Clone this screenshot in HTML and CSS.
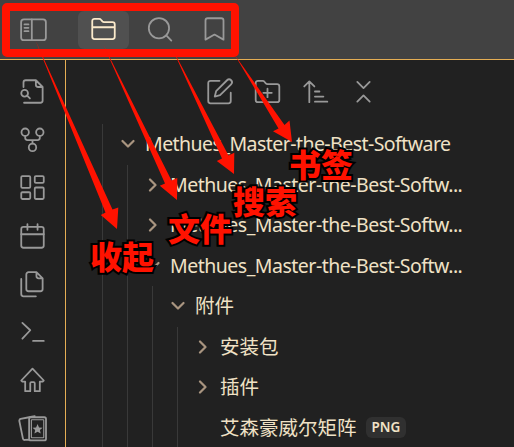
FILE: index.html
```html
<!DOCTYPE html>
<html lang="zh-CN">
<head>
<meta charset="utf-8">
<title>Methues</title>
<link rel="stylesheet" href="styles.css">
</head>
<body>
<div class="app">
  <header class="topbar">
    <div class="toggle"><svg class="icon" viewBox="0 0 24 24"><rect x="1" y="3" width="22" height="18.5" rx="2.5"/><path d="M10.5 3V21.500M4 7.500h3.500M4 10.500h3.500M4 13.500h3.500"/></svg></div>
    <nav class="tabs">
      <div class="tab active"><svg class="icon" viewBox="0 0 24 24"><path d="M2 4.500a2 2 0 0 1 2-2h4.200a2 2 0 0 1 1.600.8L11 4.800a2 2 0 0 0 1.600.7H20a2 2 0 0 1 2 2V18.500a2 2 0 0 1-2 2H4a2 2 0 0 1-2-2ZM2 10h20"/></svg></div>
      <div class="tab"><svg class="icon" viewBox="0 0 24 24"><circle cx="11.500" cy="10.800" r="9"/><path d="m18 17.300 4.500 4.500"/></svg></div>
      <div class="tab"><svg class="icon" viewBox="0 0 24 24"><path d="m20 21-8-4.500L4 21V4a2 2 0 0 1 2-2h12a2 2 0 0 1 2 2Z"/></svg></div>
    </nav>
  </header>
  <div class="body">
    <aside class="ribbon">
      <svg class="icon" viewBox="0 0 24 24"><path d="M4 8V4a2 2 0 0 1 2-2h9l6 6v12a2 2 0 0 1-2 2H4.500M15 2v4a2 2 0 0 0 2 2h4"/><circle cx="5" cy="13.500" r="3"/><path d="m7.200 15.700 2.500 2.500"/></svg>
      <svg class="icon" viewBox="0 0 24 24"><circle cx="12" cy="19" r="3.300"/><circle cx="5.500" cy="5.500" r="3.300"/><circle cx="18.500" cy="5.500" r="3.300"/><path d="M18.500 9v1.500a2 2 0 0 1-2 2h-9a2 2 0 0 1-2-2V9M12 12.500v3"/></svg>
      <svg class="icon" viewBox="0 0 24 24"><rect x="2" y="1.800" width="8" height="10.500" rx="1"/><rect x="14" y="1.800" width="8" height="6" rx="1"/><rect x="14" y="12" width="8" height="10.200" rx="1"/><rect x="2" y="16.200" width="8" height="6" rx="1"/></svg>
      <svg class="icon" viewBox="0 0 24 24"><rect x="2" y="3.500" width="20" height="18.500" rx="2"/><path d="M7.500 1v5M16.500 1v5M2 10h20"/></svg>
      <svg class="icon" viewBox="0 0 24 24"><path d="M15.500 1H8.500a2 2 0 0 0-2 2v13a2 2 0 0 0 2 2H19a2 2 0 0 0 2-2V6.500ZM15.500 1V4.500a2 2 0 0 0 2 2H21M2 7v13.500a2 2 0 0 0 2 2h11"/></svg>
      <svg class="icon" viewBox="0 0 24 24"><path d="m3 17.500 7-7.500-7-6.500M12.500 19.500h9.500"/></svg>
      <svg class="icon" viewBox="0 0 24 24"><path d="M2 12 12 1.500l10 10.500-1 1h-2.500v8.500H14v-7a1 1 0 0 0-1-1h-2a1 1 0 0 0-1 1v7H5.500v-8.500H3Z"/></svg>
      <svg class="icon" viewBox="0 0 24 24"><path d="M9 2 1.500 3.500a1.500 1.500 0 0 0-1.200 1.800L3.500 21a1.500 1.500 0 0 0 1.700 1.200L9 22M9 2l5-1"/><rect x="9" y="2" width="15" height="20.500" rx="1.500"/><rect x="11" y="4.200" width="11" height="16" rx=".5" class="thin"/><path class="solid" d="m16.500 8 1.300 3 3.200.3-2.400 2.100.7 3.100-2.800-1.600-2.800 1.600.7-3.100-2.400-2.100 3.200-.3Z"/></svg>
    </aside>
    <main class="explorer">
      <div class="actions">
        <svg class="icon" viewBox="0 0 24 24"><path d="M12 2.500H4a2 2 0 0 0-2 2V20.500a2 2 0 0 0 2 2H20a2 2 0 0 0 2-2V13M18.700 2a2.500 2.500 0 0 1 3.600 3.600L12.500 15.300l-4.700 1.200L9 11.700Z"/></svg>
        <svg class="icon" viewBox="0 0 24 24"><path d="M1.500 4.500a2 2 0 0 1 2-2h4.200a2 2 0 0 1 1.600.8L10.500 4.800a2 2 0 0 0 1.600.7H20.500a2 2 0 0 1 2 2V19.500a2 2 0 0 1-2 2H3.500a2 2 0 0 1-2-2ZM12 9.500v7.500M8.300 13.200h7.500"/></svg>
        <svg class="icon" viewBox="0 0 24 24"><path d="M2 7.500 6.500 3l4.500 4.500M6.500 3v18.500M11.500 12h4M11.500 16.500h7.500M11.500 21h11"/></svg>
        <svg class="icon" viewBox="0 0 24 24"><path d="m6.500 3.500 5.500 5.500 5.500-5.500M6.500 21l5.500-5.500 5.500 5.500"/></svg>
      </div>
      <div class="tree">
        <div class="row"><svg class="chevron open" viewBox="0 0 14 14"><path d="m4 1.500 5.500 5.500L4 12.500"/></svg><span class="latin root">Methues_Master-the-Best-Software</span></div>
        <div class="children">
          <div class="row"><svg class="chevron" viewBox="0 0 14 14"><path d="m4 1.500 5.500 5.500L4 12.500"/></svg><span class="latin">Methues_Master-the-Best-Softw...</span></div>
          <div class="row"><svg class="chevron" viewBox="0 0 14 14"><path d="m4 1.500 5.500 5.500L4 12.500"/></svg><span class="latin">Methues_Master-the-Best-Softw...</span></div>
          <div class="row"><svg class="chevron open" viewBox="0 0 14 14"><path d="m4 1.500 5.500 5.500L4 12.500"/></svg><span class="latin">Methues_Master-the-Best-Softw...</span></div>
          <div class="children">
            <div class="row"><svg class="chevron open" viewBox="0 0 14 14"><path d="m4 1.500 5.500 5.500L4 12.500"/></svg><span>附件</span></div>
            <div class="children">
              <div class="row"><svg class="chevron" viewBox="0 0 14 14"><path d="m4 1.500 5.500 5.500L4 12.500"/></svg><span>安装包</span></div>
              <div class="row"><svg class="chevron" viewBox="0 0 14 14"><path d="m4 1.500 5.500 5.500L4 12.500"/></svg><span>插件</span></div>
              <div class="row leaf"><span>艾森豪威尔矩阵</span><span class="tag">PNG</span></div>
            </div>
          </div>
        </div>
      </div>
    </main>
  </div>
  <svg class="overlay" viewBox="0 0 514 447">
    <rect x="6" y="7" width="229" height="46" rx="1"/>
    <path d="M35.500 40.500 112.500 209.500 118.300 207.500 117 229 100.800 215 105.500 212.500Z"/>
    <path d="M103.500 45 171.500 180.500 177.300 178 177 200 159.800 185.700 165 183.500Z"/>
    <path d="M172 48 228.500 155.500 234.300 152.700 234 174 216.800 161 222 158.500Z"/>
    <path d="M234.500 54.500 284.500 125 289.500 120.500 292 142 273 131.300 278.500 128.500Z"/>
  </svg>
  <span class="note note-collapse">收起</span>
  <span class="note note-files">文件</span>
  <span class="note note-search">搜索</span>
  <span class="note note-bookmark">书签</span>
</div>
</body>
</html>
```
FILE: styles.css
```css
* { box-sizing: border-box; }
body {
  margin: 0;
  background: #212121;
  color: #f0e2c6;
  font: 19.5px/30px "Noto Sans", "Noto Sans CJK SC", sans-serif;
  overflow: hidden;
}
.app {
  position: relative;
  display: flex;
  flex-direction: column;
  width: 514px;
  height: 447px;
  overflow: hidden;
}
.topbar {
  display: flex;
  flex: none;
  align-items: center;
  gap: 31px;
  height: 60px;
  padding-left: 20px;
  background: #424242;
  border-bottom: 1px solid #e5ae54;
}
.toggle, .tab { display: flex; align-items: center; justify-content: center; }
.tabs { display: flex; gap: 4.500px; }
.tab { width: 51px; height: 38px; border-radius: 6px; }
.tab.active { background: #505050; }
.tab.active .icon { stroke: #fbeacb; }
.icon {
  display: block;
  flex: none;
  width: 27px;
  height: 27px;
  fill: none;
  stroke: #999;
  stroke-width: 1.600;
  stroke-linecap: round;
  stroke-linejoin: round;
  overflow: visible;
}
.thin { stroke-width: 1; }
.solid { fill: #999; stroke: none; }
.body { display: flex; flex: 1; min-height: 0; }
.ribbon {
  display: flex;
  flex: none;
  flex-direction: column;
  align-items: center;
  gap: 21.200px;
  width: 66px;
  padding-top: 18px;
  border-right: 1px solid #e5ae54;
}
.explorer { flex: 1; min-width: 0; }
.actions { display: flex; gap: 21px; padding: 18px 0 0 140px; }
.tree { margin: 19px 0 0 36px; padding-left: 18px; border-left: 1px solid #393939; }
.row { display: flex; align-items: center; height: 40.500px; white-space: nowrap; }
.children { margin-left: 6px; padding-left: 18px; border-left: 1px solid #393939; }
.chevron {
  flex: none;
  width: 14px;
  height: 14px;
  margin-right: 10px;
  fill: none;
  stroke: #a99580;
  stroke-width: 2.200;
  stroke-linecap: round;
  stroke-linejoin: round;
}
.chevron.open { transform: rotate(90deg); }
.latin { letter-spacing: -0.500px; }
.root { letter-spacing: -0.550px; }
.leaf { padding-left: 24px; }
.tag {
  margin-left: 9px;
  padding: 0 6px;
  border-radius: 6px;
  background: #303030;
  font-size: 13.500px;
  font-weight: 600;
  line-height: 21px;
}
.overlay { position: absolute; inset: 0; width: 514px; height: 447px; fill: #ff1200; }
.overlay rect { fill: none; stroke: #ff1200; stroke-width: 8; }
.note {
  position: absolute;
  color: #ff1200;
  font: 900 32px/32px "Noto Sans CJK SC", sans-serif;
  -webkit-text-stroke: 4px #000;
  paint-order: stroke fill;
  white-space: nowrap;
}
.note-collapse { left: 90px; top: 239px; }
.note-files { left: 168px; top: 211px; }
.note-search { left: 233px; top: 184px; }
.note-bookmark { left: 289px; top: 147px; }
```
